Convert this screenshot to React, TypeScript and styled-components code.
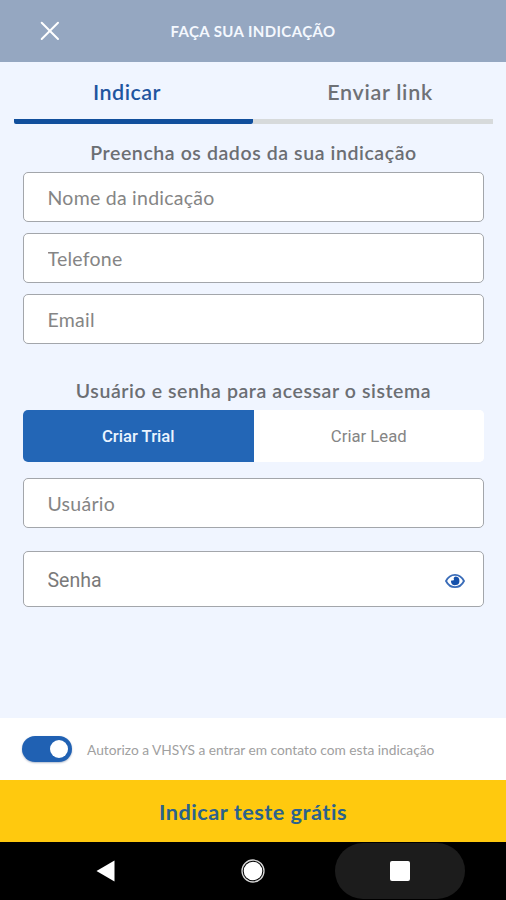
import React, { useState } from "react";
import styled, { createGlobalStyle } from "styled-components";

const Global = createGlobalStyle`
  *, *::before, *::after { box-sizing: border-box; }
  body { margin: 0; background: #f0f5ff; }
  button { border: 0; padding: 0; background: none; cursor: pointer; }
`;

const lato = `Lato, "Open Sans", sans-serif`;
const roboto = `Roboto, "Liberation Sans", sans-serif`;

const Screen = styled.div`
  width: 506px;
  height: 900px;
  display: flex;
  flex-direction: column;
  overflow: hidden;
  background: #f0f5ff;
  font-family: ${lato};
  color: #6b6f76;
`;

const Header = styled.header`
  height: 62px;
  flex: none;
  display: grid;
  grid-template-columns: 100px 1fr 100px;
  align-items: center;
  background: #95a7c1;
`;

const CloseButton = styled.button`
  width: 20px;
  height: 20px;
  margin-left: 40px;
  svg { display: block; }
`;

const Title = styled.h1`
  margin: 0;
  text-align: center;
  white-space: nowrap;
  font-size: 15px;
  font-weight: 700;
  letter-spacing: 0.4px;
  color: #f4f8fe;
`;

const Tabs = styled.nav`
  display: flex;
  flex: none;
  height: 62px;
  padding: 0 13px 0 14px;
`;

const Tab = styled.button<{ $active: boolean; $align: "start" | "end" }>`
  flex: 1;
  padding: ${(p) => (p.$align === "start" ? "2px 13px 0 0" : "2px 0 0 14px")};
  border-bottom: 5px solid ${(p) => (p.$active ? "#114f9c" : "#d7dadb")};
  border-radius: ${(p) => (p.$active ? "2px" : "0")};
  font-family: ${lato};
  font-size: 21.5px;
  font-weight: 600;
  letter-spacing: ${(p) => (p.$active ? "0.5px" : "0.7px")};
  color: ${(p) => (p.$active ? "#1f559f" : "#6e7176")};
`;

const Form = styled.form`
  flex: 1;
  padding: 0 22px 0 23px;
  display: flex;
  flex-direction: column;
`;

const SectionTitle = styled.h2<{ $top: number }>`
  margin: ${(p) => p.$top}px 0 0;
  height: 38px;
  line-height: 37px;
  text-align: center;
  white-space: nowrap;
  font-size: 19.5px;
  font-weight: 600;
  letter-spacing: 0.58px;
  color: #6b6e73;
`;

const Field = styled.label<{ $height?: number; $top?: number }>`
  display: flex;
  align-items: center;
  flex: none;
  height: ${(p) => p.$height ?? 50}px;
  margin-top: ${(p) => p.$top ?? 0}px;
  padding: 0 18px 0 23.5px;
  border: 1.5px solid #a3a6ab;
  border-radius: 5px;
  background: #fff;
`;

const Input = styled.input<{ $roboto?: boolean }>`
  flex: 1;
  min-width: 0;
  padding: ${(p) => (p.$roboto ? "2px 0 0" : "0")};
  border: 0;
  outline: 0;
  background: none;
  font-family: ${(p) => (p.$roboto ? roboto : lato)};
  font-size: 19.5px;
  letter-spacing: ${(p) => (p.$roboto ? 0 : 0.25)}px;
  color: #777;
  &::placeholder { color: ${(p) => (p.$roboto ? "#7a7a7a" : "#858585")}; opacity: 1; }
`;

const Segments = styled.div`
  display: flex;
  flex: none;
  height: 52px;
  border-radius: 5px;
  overflow: hidden;
  background: #fff;
`;

const Segment = styled.button<{ $active: boolean }>`
  flex: 1;
  padding-top: 1px;
  font-family: ${roboto};
  font-size: 16.7px;
  font-weight: ${(p) => (p.$active ? 500 : 400)};
  background: ${(p) => (p.$active ? "#2366b6" : "#fff")};
  color: ${(p) => (p.$active ? "#eaf4ff" : "#858585")};
`;

const EyeButton = styled.button`
  width: 20px;
  height: 16px;
  margin-top: 3px;
  svg { display: block; }
`;

const Consent = styled.div`
  flex: none;
  height: 62px;
  padding-left: 22px;
  display: flex;
  align-items: center;
  gap: 15px;
  background: #fff;
`;

const Switch = styled.button<{ $on: boolean }>`
  width: 50px;
  height: 26px;
  padding: 0 4px;
  display: flex;
  align-items: center;
  justify-content: ${(p) => (p.$on ? "flex-end" : "flex-start")};
  border-radius: 13px;
  background: ${(p) => (p.$on ? "#2061b3" : "#b6bcc4")};
  box-shadow: 0 1px 2px rgba(30, 60, 110, 0.35);
`;

const Knob = styled.span`
  width: 18px;
  height: 18px;
  border-radius: 50%;
  background: #fff;
`;

const ConsentText = styled.span`
  padding-top: 1px;
  white-space: nowrap;
  font-size: 13.75px;
  color: #a0a0a0;
`;

const Submit = styled.button`
  flex: none;
  height: 62px;
  padding-top: 2px;
  font-family: ${lato};
  font-size: 21.7px;
  font-weight: 700;
  letter-spacing: 0.5px;
  background: #ffc90e;
  color: #2b628c;
`;

const NavBar = styled.footer`
  flex: none;
  height: 58px;
  display: flex;
  align-items: center;
  padding-left: 40px;
  background: #000;
`;

const NavButton = styled.button<{ $pressed?: boolean; $width: number }>`
  width: ${(p) => p.$width}px;
  height: 56px;
  display: flex;
  align-items: center;
  justify-content: center;
  border-radius: 28px;
  background: ${(p) => (p.$pressed ? "#1c1c1c" : "transparent")};
`;

const TABS = ["Indicar", "Enviar link"];
const MODES = ["Criar Trial", "Criar Lead"];

export default function App() {
  const [tab, setTab] = useState(0);
  const [mode, setMode] = useState(0);
  const [allowed, setAllowed] = useState(true);
  const [visible, setVisible] = useState(false);

  return (
    <Screen>
      <Global />
      <Header>
        <CloseButton aria-label="Fechar">
          <svg width="20" height="20" viewBox="0 0 20 20" stroke="#fff" strokeWidth="2" strokeLinecap="round">
            <path d="M1.7 1.7 18 18M18 1.7 1.7 18" />
          </svg>
        </CloseButton>
        <Title>FAÇA SUA INDICAÇÃO</Title>
      </Header>
      <Tabs>
        {TABS.map((label, i) => (
          <Tab key={label} $active={tab === i} $align={i === 0 ? "start" : "end"} onClick={() => setTab(i)}>
            {label}
          </Tab>
        ))}
      </Tabs>
      <Form onSubmit={(e) => e.preventDefault()}>
        <SectionTitle $top={10}>Preencha os dados da sua indicação</SectionTitle>
        <Field>
          <Input placeholder="Nome da indicação" />
        </Field>
        <Field $top={11}>
          <Input placeholder="Telefone" />
        </Field>
        <Field $top={11}>
          <Input placeholder="Email" />
        </Field>
        <SectionTitle $top={28}>Usuário e senha para acessar o sistema</SectionTitle>
        <Segments>
          {MODES.map((label, i) => (
            <Segment type="button" key={label} $active={mode === i} onClick={() => setMode(i)}>
              {label}
            </Segment>
          ))}
        </Segments>
        <Field $top={16}>
          <Input placeholder="Usuário" />
        </Field>
        <Field $top={23} $height={56}>
          <Input placeholder="Senha" type={visible ? "text" : "password"} $roboto />
          <EyeButton type="button" aria-label="Mostrar senha" onClick={() => setVisible(!visible)}>
            <svg width="20" height="16" viewBox="0 0 20 16">
              <path d="M1 8C3 4 6.2 1.8 10 1.8S17 4 19 8c-2 4-5.2 6.2-9 6.2S3 12 1 8Z" fill="none" stroke="#3a6cb8" strokeWidth="1.8" />
              <path d="M10.8 3.6A4.300 4.300 0 1 1 6 9c0-1 .4-1.500 1-1.700.5.400 1.300.300 1.700-.300.400-.500.300-1.200-.100-1.600.500-1 1.200-1.700 2.200-1.800Z" fill="#1450ab" />
            </svg>
          </EyeButton>
        </Field>
      </Form>
      <Consent>
        <Switch $on={allowed} role="switch" aria-checked={allowed} onClick={() => setAllowed(!allowed)}>
          <Knob />
        </Switch>
        <ConsentText>Autorizo a VHSYS a entrar em contato com esta indicação</ConsentText>
      </Consent>
      <Submit>Indicar teste grátis</Submit>
      <NavBar>
        <NavButton $width={131} aria-label="Voltar">
          <svg width="20" height="22" viewBox="0 0 20 22">
            <path d="M0.5 11 18.5 0.5V21.5Z" fill="#fff" />
          </svg>
        </NavButton>
        <NavButton $width={164} aria-label="Início">
          <svg width="24" height="24" viewBox="0 0 24 24">
            <circle cx="12" cy="12" r="11" fill="none" stroke="#d8d8d8" strokeWidth="1.3" />
            <circle cx="12" cy="12" r="9.3" fill="#fff" />
          </svg>
        </NavButton>
        <NavButton $width={130} $pressed aria-label="Recentes">
          <svg width="22" height="22" viewBox="0 0 22 22">
            <rect x="1" y="1" width="20" height="20" rx="2" fill="#fff" />
          </svg>
        </NavButton>
      </NavBar>
    </Screen>
  );
}
